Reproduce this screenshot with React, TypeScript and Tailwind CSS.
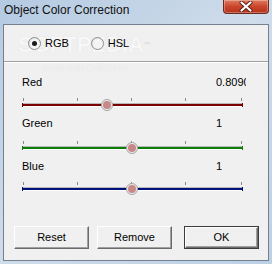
import React from "react";

const ui = { fontFamily: '"Liberation Sans", Arial, sans-serif' };

function Radio({ checked, label }: { checked?: boolean; label: string }) {
  return (
    <div className="flex items-center gap-[4px]">
      <span className="flex h-[13px] w-[13px] items-center justify-center rounded-full border border-[#8f8f8f] bg-gradient-to-br from-[#dcdcdc] to-[#fbfbfb]">
        <span className="flex h-[9px] w-[9px] items-center justify-center rounded-full bg-[#f4f4f4]">
          {checked && <span className="h-[5px] w-[5px] rounded-full bg-[#1a1a1a]" />}
        </span>
      </span>
      <span className="text-[11px] leading-[13px] text-black">{label}</span>
    </div>
  );
}

function Slider({ track, thumb }: { track: string; thumb: number }) {
  const ticks = [1, 55, 109, 163, 219];
  return (
    <div className="relative ml-[18px] h-[10px] w-[221px]">
      {ticks.map((t) => (
        <span key={t} className="absolute top-0 h-[3px] w-px bg-[#8a8a8a]" style={{ left: t }} />
      ))}
      <div className="absolute left-0 top-[5px] h-px w-full bg-[#b8b8b8]" />
      <div className={`absolute left-0 top-[6px] h-[2px] w-full ${track}`} />
      <div className="absolute left-0 top-[8px] h-px w-full bg-white" />
      <span className={`absolute left-0 top-[5px] h-[4px] w-px ${track}`} />
      <span className={`absolute right-0 top-[5px] h-[4px] w-px ${track}`} />
      <span
        className="absolute top-[1px] flex h-[12px] w-[12px] -translate-x-1/2 items-center justify-center rounded-full border border-[#a5a5a5] bg-[#ececec]"
        style={{ left: thumb }}
      >
        <span className="h-[8px] w-[8px] rounded-full bg-[#c88888]" />
      </span>
    </div>
  );
}

function Label({ name, value, className }: { name: string; value: string; className: string }) {
  return (
    <div className={`flex h-[13px] items-center text-[11px] leading-[13px] text-black ${className}`}>
      <span className="ml-[18px] w-[194px]">{name}</span>
      <span className="w-[30px] overflow-hidden whitespace-nowrap">{value}</span>
    </div>
  );
}

function Button({ label, def }: { label: string; def?: boolean }) {
  return (
    <div className={`h-[23px] w-[75px] ${def ? "border border-[#3c3c3c]" : ""}`}>
      <div className="flex h-full w-full items-center justify-center border border-b-[#6b6b6b] border-r-[#6b6b6b] border-l-white border-t-white bg-[#f0f0f0] text-[11px] text-black shadow-[inset_-1px_-1px_0_#a0a0a0]">
        {label}
      </div>
    </div>
  );
}

export default function App() {
  return (
    <div
      className="flex h-[264px] w-[272px] flex-col overflow-hidden bg-gradient-to-br from-[#b4cae2] via-[#cfdcea] to-[#bcd0e6]"
      style={ui}
    >
      <div className="relative flex h-[24px] items-start">
        <span className="ml-[4px] mt-[3px] text-[12px] leading-[15px] text-[#111]">Object Color Correction</span>
        <div className="absolute right-[3px] top-0 flex h-[14px] w-[46px] items-center justify-center rounded-b-[4px] border border-t-0 border-[#6b2a1e] bg-gradient-to-b from-[#e07a5f] via-[#c9462b] to-[#b8321c] shadow-[inset_0_0_0_1px_rgba(255,255,255,0.3)]">
          <svg width="14" height="11" viewBox="0 0 14 11">
            <path d="M2.5 1.5 L11.5 9.5 M11.5 1.5 L2.5 9.5" stroke="#5a1e14" strokeWidth="4" strokeLinecap="round" />
            <path d="M2.5 1.5 L11.5 9.5 M11.5 1.5 L2.5 9.5" stroke="#ffffff" strokeWidth="2.2" strokeLinecap="round" />
          </svg>
        </div>
      </div>
      <div className="relative mx-[3px] flex h-[237px] flex-col border border-[#74808e] bg-[#f0f0f0]">
        <div className="pointer-events-none absolute left-[14px] top-[8px] select-none text-[22px] font-bold leading-[24px] text-[#f7f7f7] [text-shadow:0_0_1px_#dadada]">
          SOFTPEDIA<span className="align-top text-[7px] text-[#e2e2e2]">™</span>
        </div>
        <div className="pointer-events-none absolute left-[38px] top-[37px] select-none text-[10px] leading-[12px] text-[#f7f7f7] [text-shadow:0_0_1px_#d2d2d2]">
          www.softpedia.com
        </div>
        <div className="relative flex items-center gap-[22px] pl-[24px] pt-[12px]">
          <Radio checked label="RGB" />
          <Radio label="HSL" />
        </div>
        <div className="relative mt-[11px] h-px bg-[#a0a0a0] shadow-[0_1px_0_#ffffff]" />
        <Label name="Red" value="0.8090" className="relative mt-[14px]" />
        <div className="relative mt-[9px]">
          <Slider track="bg-[#7a0000]" thumb={85} />
        </div>
        <Label name="Green" value="1" className="relative mt-[9px]" />
        <div className="relative mt-[11px]">
          <Slider track="bg-[#0a7d0a]" thumb={110} />
        </div>
        <Label name="Blue" value="1" className="relative mt-[9px]" />
        <div className="relative mt-[9px]">
          <Slider track="bg-[#00127a]" thumb={110} />
        </div>
        <div className="relative mb-[11px] mt-auto flex pl-[10px]">
          <Button label="Reset" />
          <div className="ml-[8px]">
            <Button label="Remove" />
          </div>
          <div className="ml-[12px]">
            <Button label="OK" def />
          </div>
        </div>
      </div>
    </div>
  );
}
